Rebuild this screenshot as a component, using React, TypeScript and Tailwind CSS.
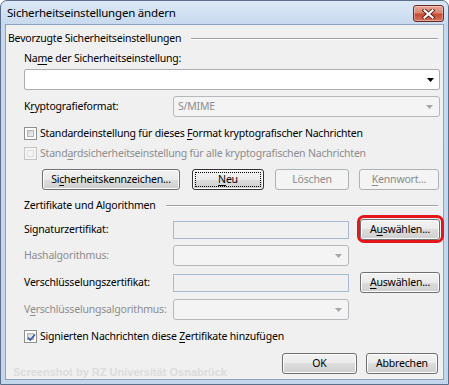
import React from "react";

const U = ({ children }: { children: React.ReactNode }) => (
  <span className="underline decoration-1 underline-offset-[2px]">{children}</span>
);

function Arrow({ disabled = false }: { disabled?: boolean }) {
  return (
    <svg width="7" height="4" viewBox="0 0 7 4">
      <path d="M0 0h7L3.5 4z" fill={disabled ? "#a6a6a6" : "#000"} />
    </svg>
  );
}

function Button({
  w,
  children,
  disabled = false,
  isDefault = false,
}: {
  w: string;
  children: React.ReactNode;
  disabled?: boolean;
  isDefault?: boolean;
}) {
  const cls = disabled
    ? "border-[#adb2b5] bg-[#f4f4f4] text-[#8a8a8a]"
    : isDefault
    ? "border-[#333333] bg-[linear-gradient(#f2f2f2_0%,#ebebeb_50%,#dddddd_50%,#cfcfcf_100%)] shadow-[inset_0_0_0_1px_#fcfcfc]"
    : "border-[#707070] bg-[linear-gradient(#f2f2f2_0%,#ebebeb_50%,#dddddd_50%,#cfcfcf_100%)] shadow-[inset_0_0_0_1px_#fcfcfc]";
  return (
    <div className={`h-[21px] flex items-stretch rounded-[3px] border ${cls} ${w}`}>
      {isDefault ? (
        <div className="m-[2px] flex-1 flex items-center justify-center border border-dotted border-black">
          {children}
        </div>
      ) : (
        <div className="flex-1 flex items-center justify-center">{children}</div>
      )}
    </div>
  );
}

function Checkbox({
  checked = false,
  disabled = false,
  children,
}: {
  checked?: boolean;
  disabled?: boolean;
  children: React.ReactNode;
}) {
  return (
    <div className="h-[13px] flex items-center gap-[3px]">
      <div
        className={`w-[13px] h-[13px] border p-[2px] ${
          disabled ? "border-[#c5c5c5] bg-[#f4f4f4]" : "border-[#8f8f8f] bg-white"
        }`}
      >
        <div
          className={`relative w-full h-full border ${
            disabled
              ? "border-[#e0e0e0] bg-[#f4f4f4]"
              : "border-[#b0b5bb] bg-[linear-gradient(135deg,#cbcfd4,#f4f4f4)]"
          }`}
        >
          {checked && (
            <svg className="absolute -left-[2px] -top-[2px]" width="11" height="11" viewBox="0 0 11 11">
              <path d="M2 5.5 L4.3 8 L9 2.5" fill="none" stroke="#3a5a9e" strokeWidth="1.7" />
            </svg>
          )}
        </div>
      </div>
      <span className={`leading-[13px] ${disabled ? "text-[#8d8d8d]" : ""}`}>{children}</span>
    </div>
  );
}

function DisabledCombo({ w, text }: { w: string; text?: string }) {
  return (
    <div
      className={`h-[21px] ${w} flex items-center justify-between rounded-[3px] border border-[#b4b8bc] bg-[#f4f4f4] pl-[4px] pr-[6px] text-[#8d8d8d]`}
    >
      <span>{text}</span>
      <Arrow disabled />
    </div>
  );
}

function Field() {
  return <div className="h-[18px] w-[176px] border border-[#a9b9cf] bg-[#f0f0f0]" />;
}

export default function App() {
  return (
    <div className="w-[449px] h-[385px] bg-white">
      <div className="w-[449px] h-[385px] flex flex-col border border-[#5b6f8a] rounded-t-[7px] bg-[linear-gradient(#dce8f6,#c7d9ee_24px,#c3d6ec)] text-black font-['Noto_Sans',sans-serif]">
        {/* Title bar */}
        <div className="h-[23px] flex items-start pl-[6px] pr-[4px]">
          <div className="flex-1 h-[23px] flex items-center text-[11.5px] tracking-[-0.2px] text-black">
            Sicherheitseinstellungen ändern
          </div>
          <div className="mt-[4px] w-[31px] h-[17px] rounded-[3px] border border-[#6b2a22] bg-[linear-gradient(#e8a797_0%,#d98670_45%,#c84a31_55%,#d2735b_100%)] shadow-[inset_0_0_0_1px_rgba(255,255,255,0.35)] flex items-center justify-center">
            <svg width="13" height="10" viewBox="0 0 13 10">
              <path d="M2.5 1.5 L10.5 8.5 M10.5 1.5 L2.5 8.5" stroke="#5a2018" strokeWidth="4" strokeLinecap="square" />
              <path d="M2.5 1.5 L10.5 8.5 M10.5 1.5 L2.5 8.5" stroke="#ffffff" strokeWidth="2.2" strokeLinecap="square" />
            </svg>
          </div>
        </div>

        {/* Client area */}
        <div className="mx-[4px] h-[356px] border border-[#8ea3bd] bg-[#f0f0f0] flex flex-col text-[10.5px] tracking-[-0.2px] text-black">
          {/* Group 1 header */}
          <div className="mt-[7px] h-[14px] flex items-center pl-[2px] pr-[5px]">
            <span>Bevorzugte Sicherheitseinstellungen</span>
            <div className="ml-[10px] flex-1 border-t border-b border-t-[#a0a0a0] border-b-white" />
          </div>

          <div className="mt-[6px] h-[14px] flex items-center pl-[18px]">
            <span>
              Na<U>m</U>e der Sicherheitseinstellung:
            </span>
          </div>

          <div className="mt-[3px] pl-[18px] pr-[3px]">
            <div className="h-[21px] flex items-center justify-end rounded-[2px] border border-[#abadb3] bg-white pr-[5px]">
              <Arrow />
            </div>
          </div>

          <div className="mt-[6px] h-[21px] flex items-center pl-[18px] pr-[3px]">
            <span className="w-[149px]">
              K<U>r</U>yptografieformat:
            </span>
            <DisabledCombo w="flex-1" text="S/MIME" />
          </div>

          <div className="mt-[10px] pl-[18px]">
            <Checkbox>
              Standardeinstellung für dieses <U>F</U>ormat kryptografischer Nachrichten
            </Checkbox>
          </div>

          <div className="mt-[7px] pl-[18px]">
            <Checkbox disabled>
              Stand<U>a</U>rdsicherheitseinstellung für alle kryptografischen Nachrichten
            </Checkbox>
          </div>

          <div className="mt-[9px] h-[21px] flex items-center pl-[36px]">
            <Button w="w-[138px]">
              <span>
                Si<U>c</U>herheitskennzeichen...
              </span>
            </Button>
            <div className="ml-[12px]">
              <Button w="w-[72px]" isDefault>
                <span>
                  <U>N</U>eu
                </span>
              </Button>
            </div>
            <div className="ml-[11px]">
              <Button w="w-[74px]" disabled>
                <span>Löschen</span>
              </Button>
            </div>
            <div className="ml-[10px]">
              <Button w="w-[80px]" disabled>
                <span>
                  <U>K</U>ennwort...
                </span>
              </Button>
            </div>
          </div>

          {/* Group 2 header */}
          <div className="mt-[9px] h-[14px] flex items-center pl-[18px] pr-[5px]">
            <span>Zertifikate und Algorithmen</span>
            <div className="ml-[10px] flex-1 border-t border-b border-t-[#a0a0a0] border-b-white" />
          </div>

          <div className="mt-[6px] h-[21px] flex items-center pl-[18px]">
            <span className="w-[149px]">Signaturzertifikat:</span>
            <Field />
            <div className="relative ml-[11px]">
              <Button w="w-[80px]">
                <span>
                  A<U>u</U>swählen...
                </span>
              </Button>
              <span className="pointer-events-none absolute -left-[3px] -right-[4px] -top-[4px] -bottom-[3px] rounded-[7px] border-[3px] border-[#e3161c]" />
            </div>
          </div>

          <div className="mt-[5px] h-[21px] flex items-center pl-[18px]">
            <span className="w-[149px] text-[#8d8d8d]">Hashalgorithmus:</span>
            <DisabledCombo w="w-[176px]" />
          </div>

          <div className="mt-[6px] h-[21px] flex items-center pl-[18px]">
            <span className="w-[149px]">Verschlüsselungszertifikat:</span>
            <Field />
            <div className="ml-[11px]">
              <Button w="w-[80px]">
                <span>
                  <U>A</U>uswählen...
                </span>
              </Button>
            </div>
          </div>

          <div className="mt-[6px] h-[21px] flex items-center pl-[18px]">
            <span className="w-[149px] text-[#8d8d8d]">
              V<U>e</U>rschlüsselungsalgorithmus:
            </span>
            <DisabledCombo w="w-[176px]" />
          </div>

          <div className="mt-[10px] pl-[18px]">
            <Checkbox checked>
              Signierten Nachrichten diese <U>Z</U>ertifikate hinzufügen
            </Checkbox>
          </div>

          <div className="mt-[10px] h-[25px] flex justify-between pl-[7px] pr-[5px]">
            <span className="self-end h-[12px] leading-[12px] text-[11px] tracking-normal font-bold text-[#dcdcdc] font-['Liberation_Sans',sans-serif]">
              Screenshot by RZ Universität Osnabrück
            </span>
            <div className="self-start flex gap-[9px]">
              <Button w="w-[75px]">
                <span>OK</span>
              </Button>
              <Button w="w-[72px]">
                <span>Abbrechen</span>
              </Button>
            </div>
          </div>
        </div>
      </div>
    </div>
  );
}
